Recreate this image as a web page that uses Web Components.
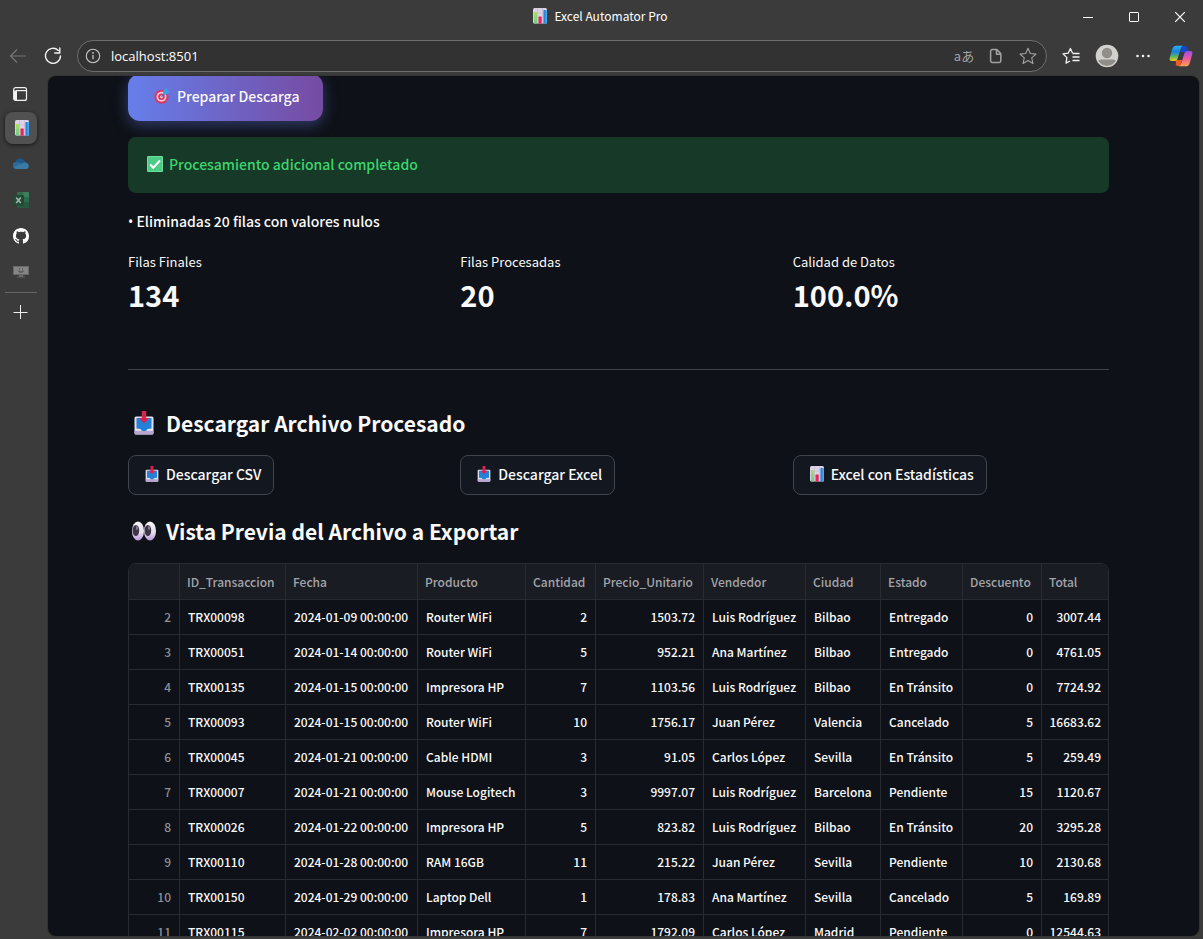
<!DOCTYPE html>
<html lang="es">
<head>
<meta charset="utf-8">
<meta name="viewport" content="width=device-width, initial-scale=1">
<title>Excel Automator Pro</title>
<style>
  html, body { margin: 0; height: 100%; background: #3b3b3b; }
  body { overflow: hidden; --app-font: "Noto Sans CJK SC", "Noto Sans", sans-serif; --ui-font: "Open Sans", "Noto Sans", sans-serif; }
</style>
</head>
<body>
<browser-window>
  <title-bar slot="title">Excel Automator Pro</title-bar>
  <address-bar slot="toolbar" url="localhost:8501"></address-bar>
  <side-rail slot="rail"></side-rail>
  <export-page></export-page>
</browser-window>

<script>
const ICONS = {
  chart: ['0 0 16 16', `<defs><linearGradient id="g" x1="0" y1="0" x2="0" y2="1"><stop offset="0" stop-color="#a8e05a"/><stop offset="1" stop-color="#6fcf8a"/></linearGradient><linearGradient id="b" x1="0" y1="0" x2="1" y2="0"><stop offset="0" stop-color="#1b74cf"/><stop offset="1" stop-color="#4fb0f5"/></linearGradient></defs><rect x="1" y="0" width="14" height="15.500" rx="1.5" fill="#ddd3e6"/><path d="M1 5h14M1 9.5h14M5.500 0v15.500M10.500 0v15.500" stroke="#c3b8cf" stroke-width=".6"/><rect x="2" y="4" width="3" height="11.500" rx=".5" fill="url(#g)"/><rect x="6.500" y="8.500" width="3.200" height="7" rx=".5" fill="#e8245f"/><rect x="11.500" y="2" width="3.500" height="13.500" rx=".5" fill="url(#b)"/>`],
  target: ['0 0 16 16', `<circle cx="7.500" cy="8.700" r="7" fill="#dd3560"/><circle cx="7.500" cy="8.700" r="5" fill="#e6cfe0"/><circle cx="7.500" cy="8.700" r="3.300" fill="#dd3560"/><circle cx="7.500" cy="8.700" r="1.500" fill="#e6cfe0"/><path d="M7.500 8.700 12 4" stroke="#456ea8" stroke-width="1.200"/><path d="m9 5.700.4-3.400L12.600 0l.7 2.300 2.700.9-2.800 3.100-3.300.5z" fill="#39a0e6"/>`],
  check: ['0 0 16 16', `<rect width="16" height="16" rx="1" fill="#4ecb86"/><rect x=".5" y=".5" width="15" height="15" rx="1" fill="none" stroke="#6fdfa0" /><path d="m3.200 8.500 3 3.200L13 4.500" fill="none" stroke="#fff" stroke-width="2"/>`],
  inbox: ['0 0 24 24', `<rect x="2.500" y="5.500" width="19" height="18" rx="1.500" fill="#e4ddec"/><path d="M2.500 20h19v2a1.500 1.500 0 0 1-1.500 1.500H4A1.500 1.500 0 0 1 2.500 22z" fill="#b7a5cf"/><path d="M4.500 7h15v10.500l-4 .5-1.500 2h-4l-1.500-2-4-.5z" fill="#2382d8"/><path d="M9.800 0h4.400v7h3L12 12.500 6.800 7h3z" fill="#d9234f"/>`],
  eyes: ['0 0 26 22', `<defs><linearGradient id="e" x1="0" y1="0" x2="0" y2="1"><stop offset="0" stop-color="#f7f4f8"/><stop offset=".6" stop-color="#e6dced"/><stop offset="1" stop-color="#bb98da"/></linearGradient></defs><ellipse cx="7" cy="11" rx="6" ry="9.500" fill="url(#e)"/><ellipse cx="19" cy="11" rx="6" ry="9.500" fill="url(#e)"/><ellipse cx="4.900" cy="10.500" rx="3.300" ry="5.500" fill="#3f3548"/><ellipse cx="16.900" cy="10.500" rx="3.300" ry="5.500" fill="#3f3548"/><ellipse cx="6" cy="8" rx="1" ry="2" fill="#8a8292"/><ellipse cx="18" cy="8" rx="1" ry="2" fill="#8a8292"/>`],
  back: ['0 0 18 18', `<path d="M17 9H1.500M8 2.500 1.500 9 8 15.500" fill="none" stroke="#767676" stroke-width="1.200"/>`],
  reload: ['0 0 18 18', `<path d="M14.300 3.500A7.500 7.500 0 1 0 16.500 9M15.800 1v5h-5" fill="none" stroke="#f2f2f2" stroke-width="1.400" stroke-linecap="round" stroke-linejoin="round"/>`],
  info: ['0 0 16 16', `<circle cx="8" cy="8" r="6.700" fill="none" stroke="#c4c4c4" stroke-width="1.100"/><path d="M8 7v4.300" stroke="#c4c4c4" stroke-width="1.300"/><circle cx="8" cy="4.900" r=".9" fill="#c4c4c4"/>`],
  page: ['0 0 16 16', `<path d="M4.200 1.600h4.600l4 4v7.200a1.600 1.600 0 0 1-1.600 1.600h-7a1.600 1.600 0 0 1-1.600-1.600V3.200a1.600 1.600 0 0 1 1.600-1.600zM8.500 1.800v4.400h4.200" fill="none" stroke="#a3a3a3" stroke-width="1.500" stroke-linejoin="round"/>`],
  star: ['0 0 18 18', `<path d="m9 1.300 2.300 5.200 5.700.6-4.300 3.800 1.300 5.600-5-2.900-5 2.900 1.300-5.600L1 7.100l5.700-.6z" fill="none" stroke="#a3a3a3" stroke-width="1.100" stroke-linejoin="round"/>`],
  favs: ['0 0 18 18', `<path d="M10.500 6 8.400 1.500 6.200 6.200 1 6.900l3.900 3.700L4 16.100l4-2.100M10.500 6.500h7M10.500 10h7M10.500 13.500h7" fill="none" stroke="#f2f2f2" stroke-width="1.300" stroke-linejoin="round"/>`],
  user: ['0 0 24 24', `<defs><clipPath id="c"><circle cx="12" cy="12" r="10"/></clipPath></defs><circle cx="12" cy="12" r="11.300" fill="#d3d1ce"/><circle cx="12" cy="9" r="5.200" fill="#918d89"/><path clip-path="url(#c)" d="M2.500 24v-5q0-3.500 4-3.500h11q4 0 4 3.500v5z" fill="#918d89"/>`],
  more: ['0 0 16 16', `<circle cx="2.500" cy="8" r="1.300" fill="#f2f2f2"/><circle cx="8" cy="8" r="1.300" fill="#f2f2f2"/><circle cx="13.500" cy="8" r="1.300" fill="#f2f2f2"/>`],
  copilot: ['0 0 24 24', `<defs><linearGradient id="p1" x1="0" y1="0" x2="0" y2="1"><stop offset="0" stop-color="#24b5ee"/><stop offset=".4" stop-color="#1b7ee0"/><stop offset=".7" stop-color="#57b668"/><stop offset="1" stop-color="#f1cf14"/></linearGradient><linearGradient id="p2" x1="0" y1="0" x2="0" y2="1"><stop offset="0" stop-color="#9b4bf0"/><stop offset=".5" stop-color="#ec5a9b"/><stop offset="1" stop-color="#ffa44d"/></linearGradient></defs><path d="M13 2h3.200q1.600 0 2.100 1.500L19.500 8H11z" fill="#1846c8"/><path d="M7 16h6l-2 6H9q-1.700 0-2.200-1.600z" fill="#f4572b"/><path d="M7.500 1.700H14q-1.500.5-2.300 3l-3 9.500Q8 17 5.300 17H3q-3 0-2.300-3.300L3.400 4.600q1-2.900 4.100-2.900z" fill="url(#p1)"/><path d="M16.500 22.300H10q1.500-.5 2.300-3l3-9.500q.7-2.800 3.400-2.800H21q3 0 2.300 3.300l-2.700 9.100q-1 2.900-4.100 2.900z" fill="url(#p2)"/>`],
  min: ['0 0 16 16', `<path d="M3 8.500h10" stroke="#fff"/>`],
  max: ['0 0 16 16', `<rect x="3.500" y="3.500" width="9" height="9" rx=".5" fill="none" stroke="#fff"/>`],
  close: ['0 0 16 16', `<path d="m3.200 3.200 9.600 9.600m0-9.600-9.600 9.600" stroke="#fff" stroke-width="1.200"/>`],
  tabs: ['0 0 16 16', `<rect x=".7" y="1.600" width="12.800" height="12.800" rx="2" fill="none" stroke="#f2f2f2" stroke-width="1.200"/><path d="M.7 4.500H4v10H2.500A1.800 1.800 0 0 1 .7 12.700z" fill="#f2f2f2"/><path d="M3 4.600h10.500" stroke="#f2f2f2" stroke-width="1.200"/>`],
  cloud: ['0 0 16 12', `<path d="M2.500 4.500A4.500 4.500 0 0 1 10.500 2 5 5 0 0 1 13 5L5 9z" fill="#1f5786"/><path d="M3.500 11A3.500 3.500 0 0 1 3 4q2-.5 3.500.5L13 10z" fill="#2a6a9b"/><path d="m1 9 9-4.200q4-1 5.500 1.800 1 3-1.600 4.400H3.500Q1.800 11 1 9z" fill="#397ba5"/>`],
  excel: ['0 0 16 16', `<path d="M4 0h11.500q.5 0 .5.500v15q0 .5-.5.500H4z" fill="#28573f"/><path d="M10 0h5.500q.5 0 .5.500V5h-6z" fill="#3d7d5c"/><path d="M4 0h6v5H4z" fill="#33694d"/><path d="M10 5h6v5h-6z" fill="#2f694b"/><rect y="3" width="11" height="10.500" rx=".7" fill="#214a35"/><path d="m3.200 5.500 4.600 5.500M7.800 5.500 3.200 11" stroke="#a7b5ad" stroke-width="1.500"/>`],
  github: ['0 0 16 16', `<path fill="#fff" d="M8 0C3.580 0 0 3.580 0 8c0 3.540 2.290 6.530 5.470 7.590.4.070.55-.17.55-.38 0-.19-.01-.82-.01-1.490-2.010.37-2.530-.49-2.690-.94-.09-.23-.48-.94-.82-1.130-.28-.15-.68-.52-.01-.53.63-.01 1.080.58 1.230.82.72 1.210 1.870.87 2.330.66.07-.52.28-.87.51-1.070-1.780-.2-3.640-.89-3.640-3.950 0-.87.31-1.590.82-2.150-.08-.2-.36-1.020.08-2.120 0 0 .67-.21 2.200.82.64-.18 1.320-.27 2-.27s1.360.09 2 .27c1.530-1.040 2.200-.82 2.200-.82.44 1.100.16 1.920.08 2.120.51.56.82 1.270.82 2.150 0 3.070-1.870 3.750-3.650 3.950.29.25.54.73.54 1.480 0 1.070-.01 1.930-.01 2.200 0 .21.15.46.55.38A8.010 8.010 0 0 0 16 8c0-4.420-3.580-8-8-8z"/>`],
  monitor: ['0 0 16 12', `<rect x=".5" y=".5" width="15" height="8" fill="#858585" stroke="#686868"/><path d="M6 9h4v1.500h2v1H4v-1h2z" fill="#686868"/><path d="M6 2.500h1v1H6zM9 2.500h1v1H9zM5.500 4.500h1v1h3v-1h1v1l-1 1h-3l-1-1z" fill="#444"/>`],
  plus: ['0 0 16 16', `<path d="M7.500 1v14M.5 8.500h14" stroke="#f0f0f0"/>`]
};

const define = (name, css, html, setup) => {
  const template = document.createElement('template');
  customElements.define(name, class extends HTMLElement {
    connectedCallback() {
      if (this.shadowRoot) return;
      const root = this.attachShadow({ mode: 'open' });
      template.innerHTML = `<style>*{box-sizing:border-box}${css}</style>${html}`;
      root.append(template.content.cloneNode(true));
      if (setup) setup(this, root);
    }
  });
};

define('ui-icon', `:host{display:block;flex:none} svg{display:block}`, '', (el, root) => {
  const [box, body] = ICONS[el.getAttribute('name')];
  const w = el.getAttribute('width') || 16;
  const h = el.getAttribute('height') || w;
  root.innerHTML += `<svg aria-hidden="true" width="${w}" height="${h}" viewBox="${box}">${body}</svg>`;
});

define('browser-window', `
  :host{display:grid;grid-template:34px 42px minmax(0,1fr) / 48px minmax(0,1fr);height:100vh;background:#3b3b3b}
  .title,.tools{grid-column:1/-1}
  main{background:#0e1117;border-radius:8px;overflow:hidden;margin:0 4px 3px 0;box-shadow:0 0 0 1px #333}`,
  `<div class="title"><slot name="title"></slot></div>
   <div class="tools"><slot name="toolbar"></slot></div>
   <nav><slot name="rail"></slot></nav>
   <main><slot></slot></main>`);

define('title-bar', `
  :host{display:grid;grid-template-columns:1fr auto 1fr;height:34px;font:12px/16px var(--app-font);color:#fff}
  .name{display:flex;align-items:center;gap:6px;padding:0 3px 2px 0}
  .controls{display:flex;justify-content:flex-end}
  button{width:46px;border:0;padding:0;background:none;display:grid;place-items:center}`,
  `<span></span><div class="name"><ui-icon name="chart" width="16"></ui-icon><span><slot></slot></span></div>
   <div class="controls"><button aria-label="Minimizar"><ui-icon name="min"></ui-icon></button><button aria-label="Maximizar"><ui-icon name="max"></ui-icon></button><button aria-label="Cerrar"><ui-icon name="close"></ui-icon></button></div>`);

define('address-bar', `
  :host{display:flex;height:42px;padding:6px 2px 0 0}
  button{width:36px;height:32px;border:0;padding:0;background:none;display:grid;place-items:center;flex:none}
  .box{flex:1;display:flex;align-items:center;height:32px;margin:0 6px;border:1px solid #6e6e6e;border-radius:16px;background:#323232;padding-right:2px}
  .box button{width:32px;height:30px}
  .box .site{width:30px}
  input{flex:1;min-width:0;border:0;background:none;outline:0;padding:0 0 0 3px;color:#fff;font:13px/20px var(--ui-font)}
  .box .lang{font:13px/16px var(--app-font);color:#a3a3a3}
  .back{width:35px}
  .wide{width:40px}`,
  `<button class="back" aria-label="Atrás"><ui-icon name="back" width="18"></ui-icon></button>
   <button aria-label="Actualizar"><ui-icon name="reload" width="18"></ui-icon></button>
   <div class="box"><button class="site" aria-label="Información del sitio"><ui-icon name="info"></ui-icon></button>
   <input type="text" aria-label="Dirección">
   <button class="lang" aria-label="Traducir">aあ</button><button aria-label="Aplicación"><ui-icon name="page"></ui-icon></button><button aria-label="Favorito"><ui-icon name="star" width="18"></ui-icon></button></div>
   <button aria-label="Favoritos"><ui-icon name="favs" width="18"></ui-icon></button><button aria-label="Perfil"><ui-icon name="user" width="24"></ui-icon></button><button aria-label="Más"><ui-icon name="more"></ui-icon></button><button class="wide" aria-label="Copilot"><ui-icon name="copilot" width="24"></ui-icon></button>`,
  (el, root) => { root.querySelector('input').value = el.getAttribute('url'); });

define('side-rail', `
  :host{display:flex;flex-direction:column;width:42px}
  button{height:36px;border:0;padding:0;background:none;display:grid;place-items:center}
  .active{width:32px;height:32px;margin:0 5px 2px;padding-left:2px;border-radius:8px;background:#515151;box-shadow:0 1px 4px #000a}
  hr{width:32px;height:0;margin:2px 5px 1px;border:0;border-top:1px solid #666}`,
  `<button aria-label="Pestañas"><ui-icon name="tabs"></ui-icon></button>
   <button class="active" aria-label="Excel Automator Pro"><ui-icon name="chart"></ui-icon></button>
   <button aria-label="OneDrive"><ui-icon name="cloud" width="16" height="12"></ui-icon></button>
   <button aria-label="Excel"><ui-icon name="excel"></ui-icon></button>
   <button aria-label="GitHub"><ui-icon name="github"></ui-icon></button>
   <button aria-label="Escritorio"><ui-icon name="monitor" width="16" height="12"></ui-icon></button>
   <hr><button aria-label="Nueva pestaña"><ui-icon name="plus"></ui-icon></button>`);

define('app-button', `
  :host{display:block}
  button{display:flex;align-items:center;gap:6px;height:40px;padding:0 12px 2px 15px;border:1px solid #41444c;border-radius:8px;background:#131720;color:#fafafa;font:500 14px/24px var(--app-font);white-space:nowrap}
  :host([primary]) button{height:47px;padding:0 23px 3px 26px;gap:7px;border:0;border-radius:12px;background:linear-gradient(90deg,#667eea,#764ba2);box-shadow:0 4px 15px #667eea66}`,
  `<button type="button"><slot name="icon"></slot><span><slot></slot></span></button>`);

define('app-alert', `
  :host{display:flex;align-items:center;gap:6px;box-sizing:border-box;height:56px;padding:0 19px 2px;border-radius:8px;background:#173928;color:#3dd56d;font:500 14px/24px var(--app-font)}`,
  `<ui-icon name="check"></ui-icon><span role="status"><slot></slot></span>`);

define('app-metric', `
  :host{display:block;color:#fafafa;font-family:var(--app-font)}
  .label{font-size:13px;line-height:22px}
  .value{font-size:29px;line-height:42px;padding-bottom:6px;font-weight:700}`,
  `<div class="label"><slot></slot></div><div class="value"><slot name="value"></slot></div>`);

define('section-title', `
  :host{display:block;padding:6px 0 2px}
  h3{display:flex;align-items:center;gap:9px;margin:0;padding-left:3px;font:700 21px/28px var(--app-font);color:#fafafa}`,
  `<h3><slot name="icon"></slot><span><slot></slot></span></h3>`);

const COLUMNS = [['', 51, 1], ['ID_Transaccion', 106], ['Fecha', 132], ['Producto', 108], ['Cantidad', 70, 1], ['Precio_Unitario', 108, 1], ['Vendedor', 102], ['Ciudad', 75], ['Estado', 82], ['Descuento', 79, 1], ['Total', 0, 1]];
const ROWS = `2|TRX00098|2024-01-09|Router WiFi|2|1503.72|Luis Rodríguez|Bilbao|Entregado|0|3007.44
3|TRX00051|2024-01-14|Router WiFi|5|952.21|Ana Martínez|Bilbao|Entregado|0|4761.05
4|TRX00135|2024-01-15|Impresora HP|7|1103.56|Luis Rodríguez|Bilbao|En Tránsito|0|7724.92
5|TRX00093|2024-01-15|Router WiFi|10|1756.17|Juan Pérez|Valencia|Cancelado|5|16683.62
6|TRX00045|2024-01-21|Cable HDMI|3|91.05|Carlos López|Sevilla|En Tránsito|5|259.49
7|TRX00007|2024-01-21|Mouse Logitech|3|9997.07|Luis Rodríguez|Barcelona|Pendiente|15|1120.67
8|TRX00026|2024-01-22|Impresora HP|5|823.82|Luis Rodríguez|Bilbao|En Tránsito|20|3295.28
9|TRX00110|2024-01-28|RAM 16GB|11|215.22|Juan Pérez|Sevilla|Pendiente|10|2130.68
10|TRX00150|2024-01-29|Laptop Dell|1|178.83|Ana Martínez|Sevilla|Cancelado|5|169.89
11|TRX00115|2024-02-02|Impresora HP|7|1792.09|Carlos López|Madrid|Pendiente|0|12544.63`
  .split('\n').map(line => line.split('|').map((v, i) => i === 2 ? v + ' 00:00:00' : v));

define('data-grid', `
  :host{display:block;border:1px solid #292b31;border-radius:8px;overflow:hidden}
  table{width:100%;table-layout:fixed;border-collapse:separate;border-spacing:0;color:#fafafa;font:500 12px/20px var(--app-font)}
  th,td{height:35px;padding:0 2px 0 8px;border:0 solid #292b31;border-width:0 1px 1px 0;text-align:left;white-space:nowrap}
  th{height:36px;padding-left:7px;background:#1a1c24;color:#a3a4a8;font-weight:500}
  tr>:last-child{border-right-width:0}
  td.num{text-align:right;padding:0 8px 0 2px}
  td:last-child.num{padding-right:7px}
  td:first-child{color:#8f9095}`,
  `<table><colgroup>${COLUMNS.map(c => `<col${c[1] ? ` style="width:${c[1]}px"` : ''}>`).join('')}</colgroup>
   <thead><tr>${COLUMNS.map(c => `<th scope="col">${c[0]}</th>`).join('')}</tr></thead>
   <tbody>${ROWS.map(r => `<tr>${r.map((v, i) => `<td${COLUMNS[i][2] ? ' class="num"' : ''}>${v}</td>`).join('')}</tr>`).join('')}</tbody></table>`);

define('export-page', `
  :host{display:flex;flex-direction:column;gap:16px;margin-top:-2px;padding:0 90px 0 80px;color:#fafafa;font:500 14px/24px var(--app-font)}
  p{margin:0;padding-bottom:2px}
  .dot{font:14px/1 "Noto Sans",sans-serif}
  .cols{display:grid;grid-template-columns:repeat(3,minmax(0,1fr));gap:16px;font-weight:400}
  hr{width:100%;height:2px;margin:32px 0 16px;border:0;border-top:1px solid #41434a}`,
  `<app-button primary><ui-icon slot="icon" name="target"></ui-icon>Preparar Descarga</app-button>
   <app-alert>Procesamiento adicional completado</app-alert>
   <p><span class="dot">•</span> Eliminadas 20 filas con valores nulos</p>
   <div class="cols">
     <app-metric>Filas Finales<span slot="value">134</span></app-metric>
     <app-metric>Filas Procesadas<span slot="value">20</span></app-metric>
     <app-metric>Calidad de Datos<span slot="value">100.0%</span></app-metric>
   </div>
   <hr>
   <section-title><ui-icon slot="icon" name="inbox" width="26" height="24"></ui-icon>Descargar Archivo Procesado</section-title>
   <div class="cols">
     <app-button><ui-icon slot="icon" name="inbox"></ui-icon>Descargar CSV</app-button>
     <app-button><ui-icon slot="icon" name="inbox"></ui-icon>Descargar Excel</app-button>
     <app-button><ui-icon slot="icon" name="chart"></ui-icon>Excel con Estadísticas</app-button>
   </div>
   <section-title><ui-icon slot="icon" name="eyes" width="26" height="22"></ui-icon>Vista Previa del Archivo a Exportar</section-title>
   <data-grid></data-grid>`);
</script>
</body>
</html>
